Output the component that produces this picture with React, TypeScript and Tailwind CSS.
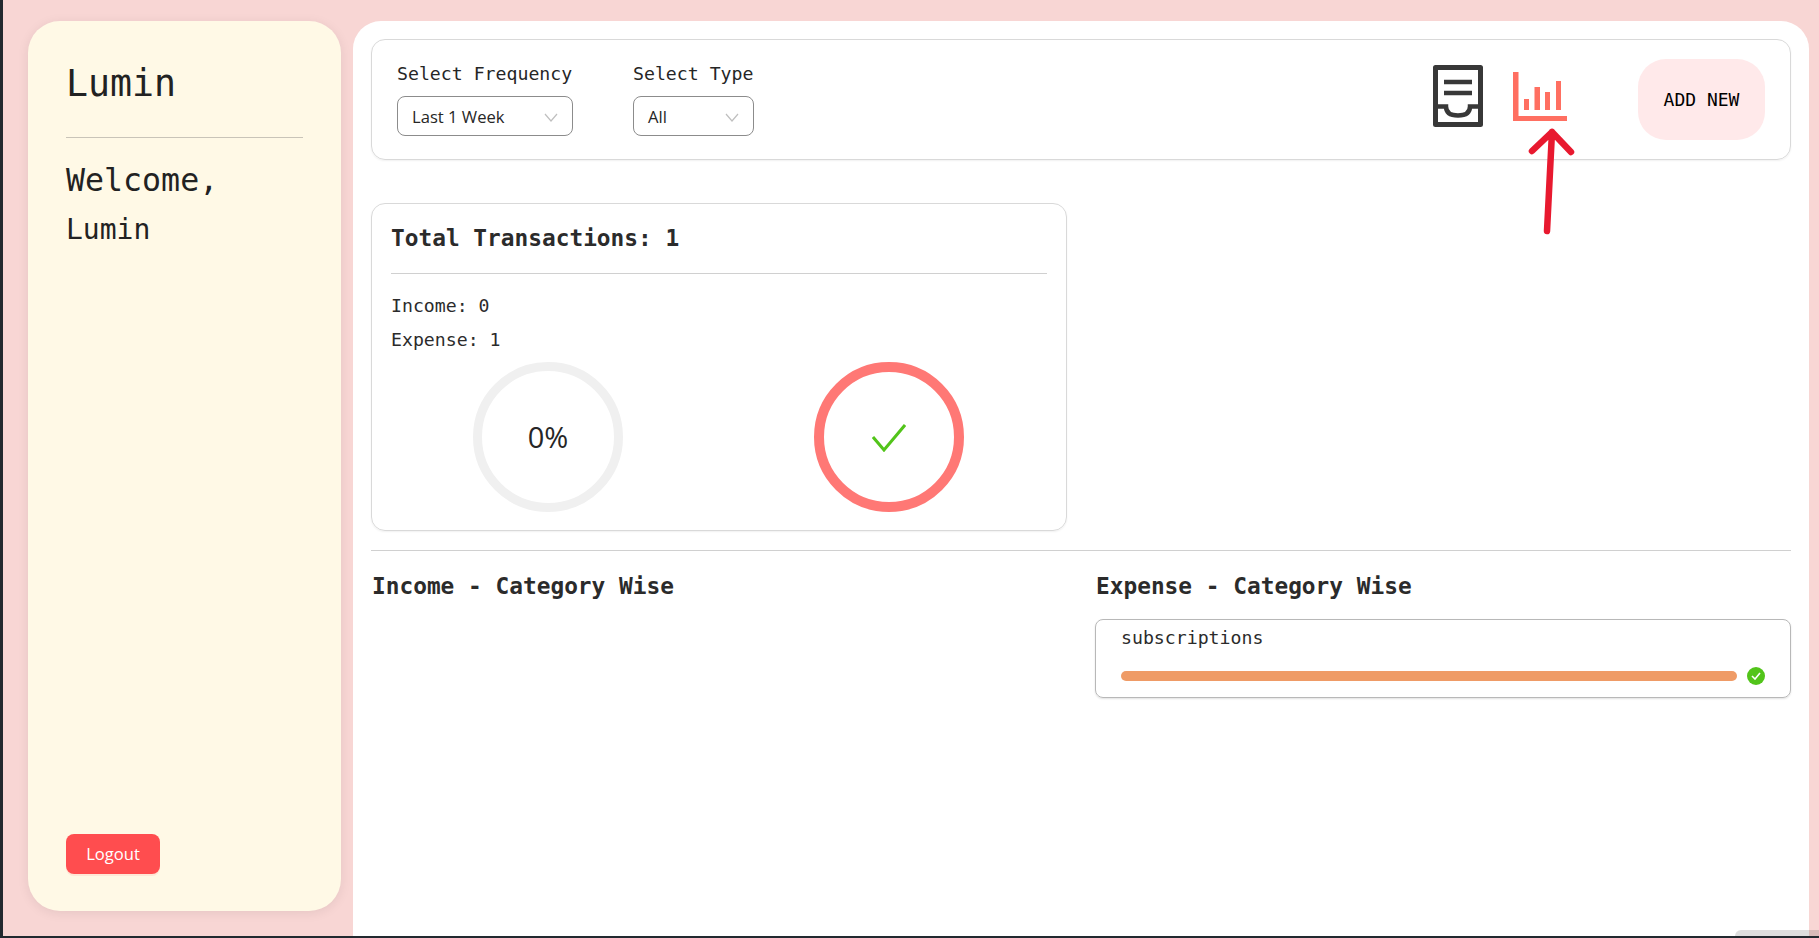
const mono = "font-['DejaVu_Sans_Mono',monospace]";
const sans = "font-['Open_Sans',sans-serif]";

function Chevron() {
  return (
    <svg width="14" height="9" viewBox="0 0 14 9" fill="none" className="ml-auto">
      <path d="M1 1l6 7 6-7" stroke="#bfbfbf" strokeWidth="1.2" />
    </svg>
  );
}

function Filter({ label, value, width }: { label: string; value: string; width: string }) {
  return (
    <div className={width}>
      <div className={`${mono} text-[18.200px] leading-[22px] text-[#262626] whitespace-nowrap`}>{label}</div>
      <div className={`mt-[11px] h-[40px] flex items-center rounded-[8px] border border-[#8c8c8c] pl-[14px] pr-[14px] pt-[2px] ${sans} text-[16.600px] text-[#262626]`}>
        <span>{value}</span>
        <Chevron />
      </div>
    </div>
  );
}

function TrayIcon() {
  return (
    <svg width="50" height="62" viewBox="0 0 50 62" fill="none" stroke="#383838">
      <rect x="2.5" y="2.5" width="45" height="57" strokeWidth="5" strokeLinejoin="round" />
      <path d="M11 17h28M11 28h28" strokeWidth="4.5" />
      <path d="M2 41.5h11c0 6.500 5 9 12 9s12-2.500 12-9h11" strokeWidth="4.5" />
    </svg>
  );
}

function ChartIcon() {
  return (
    <svg width="54" height="49" viewBox="0 0 54 49" fill="#ff6f61">
      <path d="M0 0h5.500v44H54v5H0z" />
      <rect x="11" y="27" width="5" height="11" />
      <rect x="21.500" y="15" width="5.500" height="23" />
      <rect x="32" y="20" width="5" height="18" />
      <rect x="43" y="9" width="5" height="29" />
    </svg>
  );
}

function RedArrow() {
  return (
    <svg width="56" height="114" viewBox="0 0 56 114" fill="none" className="absolute left-[1524px] top-[124px]">
      <path d="M28 8l-5 99M8 27L28 8l19 20" stroke="#e8192f" strokeWidth="6.500" strokeLinecap="round" strokeLinejoin="round" />
    </svg>
  );
}

function SummaryCard() {
  return (
    <div className="mt-[43px] w-[696px] h-[328px] rounded-[14px] border border-[#d9d9d9] px-[19px] pt-[21px] shadow-[0_1px_2px_rgba(0,0,0,0.06)]">
      <div className={`${mono} font-bold text-[22.800px] leading-[26px] text-[#2b2b2b]`}>Total Transactions: 1</div>
      <div className="mt-[22px] h-px bg-[#d0d0d0]" />
      <div className={`mt-[21px] ${mono} text-[18.200px] leading-[22px] text-[#2b2b2b]`}>Income: 0</div>
      <div className={`mt-[12px] ${mono} text-[18.200px] leading-[22px] text-[#2b2b2b]`}>Expense: 1</div>
      <div className="mt-[11px] ml-[82px] flex gap-[191px]">
        <div className={`w-[150px] h-[150px] rounded-full border-[9px] border-[#f0f0f0] flex items-center justify-center ${sans} text-[29px] text-[#262626]`}>
          0%
        </div>
        <div className="w-[150px] h-[150px] rounded-full border-[10px] border-[#ff7875] flex items-center justify-center">
          <svg width="34" height="28" viewBox="0 0 34 28" fill="none" className="mt-[2px]">
            <path d="M1 13l11 13L33 1" stroke="#52c41a" strokeWidth="3" />
          </svg>
        </div>
      </div>
    </div>
  );
}

function CategoryCard() {
  return (
    <div className="mt-[20px] -ml-px h-[79px] rounded-[8px] border border-[#b8b8b8] pl-[25px] pr-[25px] pt-[7px] shadow-[0_1px_2px_rgba(0,0,0,0.12)]">
      <div className={`${mono} text-[18.200px] leading-[22px] text-[#2b2b2b]`}>subscriptions</div>
      <div className="mt-[18px] flex items-center gap-[10px]">
        <div className="flex-1 h-[10px] rounded-full bg-[#ef9b66]" />
        <div className="w-[18px] h-[18px] rounded-full bg-[#52c41a] flex items-center justify-center">
          <svg width="10" height="8" viewBox="0 0 10 8" fill="none">
            <path d="M1 4l3 3 5-6" stroke="#fff" strokeWidth="1.600" />
          </svg>
        </div>
      </div>
    </div>
  );
}

export default function App() {
  return (
    <div className="relative h-screen overflow-hidden flex flex-col bg-[#f8d6d4]">
      <div className="flex flex-1 min-h-0">
        <div className="w-[3px] bg-[#22292f]" />
        <div className="flex flex-1 pt-[21px] pl-[25px] gap-[12px]">
          {/* sidebar */}
          <aside className="w-[313px] h-[890px] rounded-[32px] bg-[#fff9e6] shadow-[0_2px_12px_rgba(0,0,0,0.08)] px-[38px] flex flex-col">
            <div className={`mt-[40px] ${mono} text-[36.500px] leading-[46px] text-[#222]`}>Lumin</div>
            <div className="mt-[30px] h-px bg-[#c9c4b8]" />
            <div className={`mt-[22px] ${mono} text-[31.600px] leading-[40px] text-[#222]`}>Welcome,</div>
            <div className={`mt-[13px] ${mono} text-[28px] leading-[34px] text-[#222]`}>Lumin</div>
            <button className={`mt-auto mb-[37px] w-[94px] h-[40px] rounded-[8px] bg-[#ff4d4f] text-white text-[16.600px] ${sans} shadow-[0_2px_0_rgba(255,77,79,0.1)]`}>
              Logout
            </button>
          </aside>

          {/* main panel */}
          <main className="w-[1456px] rounded-t-[28px] bg-white px-[18px] pt-[18px]">
            <div className="h-[121px] rounded-[14px] border border-[#d9d9d9] pl-[25px] pr-[25px] flex shadow-[0_1px_2px_rgba(0,0,0,0.06)]">
              <div className="pt-[23px] flex gap-[60px]">
                <Filter label="Select Frequency" value="Last 1 Week" width="w-[176px]" />
                <Filter label="Select Type" value="All" width="w-[121px]" />
              </div>
              <div className="ml-auto flex">
                <div className="mt-[25px]"><TrayIcon /></div>
                <div className="mt-[32px] ml-[30px]"><ChartIcon /></div>
                <button className={`mt-[19px] ml-[71px] w-[127px] h-[81px] rounded-[28px] bg-[#ffe9ea] ${mono} text-[18px] text-black`}>
                  ADD NEW
                </button>
              </div>
            </div>

            <SummaryCard />

            <div className="mt-[19px] h-px bg-[#d0d0d0]" />

            <div className="flex">
              <div className="w-[725px] pl-px">
                <h2 className={`mt-[22px] ${mono} font-bold text-[22.800px] leading-[26px] text-[#2b2b2b]`}>Income - Category Wise</h2>
              </div>
              <div className="flex-1">
                <h2 className={`mt-[22px] ${mono} font-bold text-[22.800px] leading-[26px] text-[#2b2b2b]`}>Expense - Category Wise</h2>
                <CategoryCard />
              </div>
            </div>
          </main>
        </div>
      </div>
      <div className="h-[2px] bg-[#22292f]" />

      <RedArrow />
      {/* horizontal scrollbar thumb peeking in at the bottom */}
      <div className="absolute left-[1735px] right-0 bottom-[2px] h-[6px] rounded-tl-[6px] bg-black/[.13]" />
    </div>
  );
}
